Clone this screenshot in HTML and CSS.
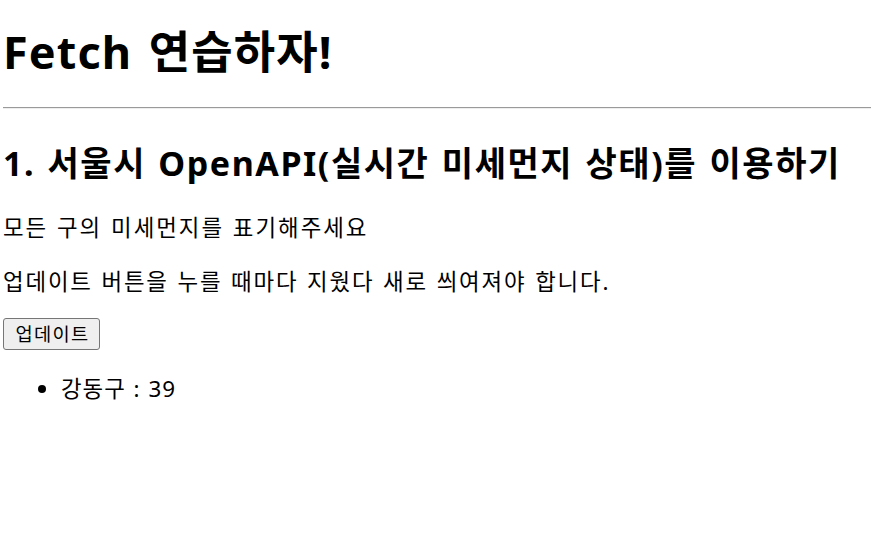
FILE: index.html
```html
<!DOCTYPE html>
<html lang="ko">
<head>
<meta charset="utf-8">
<title>Fetch 연습하자!</title>
<link rel="stylesheet" href="styles.css">
</head>
<body>
<h1 class="title">Fetch 연습하자!</h1>
<hr class="rule">
<h2 class="subtitle">1. 서울시 OpenAPI(실시간 미세먼지 상태)를 이용하기</h2>
<p class="text first">모든 구의 미세먼지를 표기해주세요</p>
<p class="text second">업데이트 버튼을 누를 때마다 지웠다 새로 씌여져야 합니다.</p>
<button class="update-btn" type="button">업데이트</button>
<ul class="dust-list">
  <li class="dust-item">강동구 : 39</li>
</ul>
</body>
</html>
```
FILE: styles.css
```css
html, body {
  background: #fff;
}
body {
  margin: 0 3px;
  padding: 0;
  color: #000;
  font-family: "Noto Sans", "Noto Sans CJK KR", sans-serif;
  font-size: 22.4px;
  line-height: 1.5;
  word-spacing: 1px;
}
.title {
  font-size: 45px;
  font-weight: 700;
  line-height: 54px;
  margin: 0;
  padding-top: 25px;
  letter-spacing: 1.1px;
  word-spacing: 4px;
}
.rule {
  margin: 28px 0 0 0;
  border: 0;
  border-top: 1px solid #9a9a9a;
  border-bottom: 1px solid #eeeeee;
  height: 0;
}
.subtitle {
  font-size: 34px;
  font-weight: 700;
  line-height: 41px;
  margin: 34px 0 0 0;
  letter-spacing: 1.55px;
  word-spacing: 2px;
}
.text {
  margin: 0;
  line-height: 34px;
  letter-spacing: 2px;
}
.second {
  margin-top: 20px;
  letter-spacing: 1.85px;
}
.first {
  margin-top: 27px;
}
.update-btn {
  display: block;
  margin-top: 19px;
  width: 97px;
  height: 32px;
  padding: 0 0 0 2px;
  font-family: "Noto Sans", "Noto Sans CJK KR", sans-serif;
  font-size: 18.7px;
  letter-spacing: 1.3px;
  line-height: 1;
  color: #000;
  background: #efefef;
  border: 1px solid #767676;
  border-radius: 3px;
}
.dust-list {
  margin: 22px 0 0 0;
  padding-left: 58px;
}
.dust-item {
  line-height: 34px;
  letter-spacing: 1px;
  word-spacing: 1px;
}
```
